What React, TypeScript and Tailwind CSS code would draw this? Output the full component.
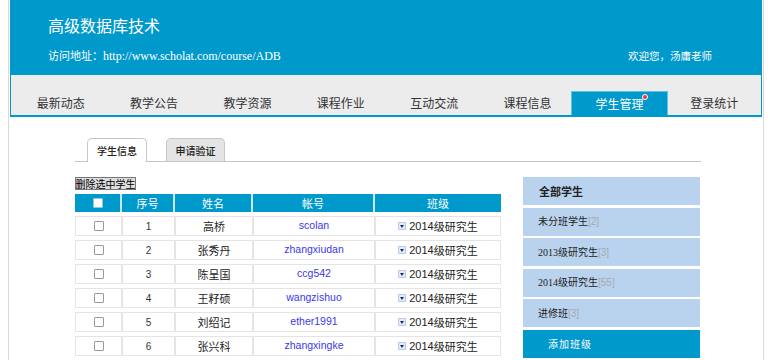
import React from 'react';

const navItems = ['最新动态', '教学公告', '教学资源', '课程作业', '互动交流', '课程信息', '学生管理', '登录统计'];

const students = [
    { no: 1, name: '高桥', account: 'scolan' },
    { no: 2, name: '张秀丹', account: 'zhangxiudan' },
    { no: 3, name: '陈呈国', account: 'ccg542' },
    { no: 4, name: '王籽硕', account: 'wangzishuo' },
    { no: 5, name: '刘绍记', account: 'ether1991' },
    { no: 6, name: '张兴科', account: 'zhangxingke' },
];

const groups = [
    { label: '未分班学生', count: 2 },
    { label: '2013级研究生', count: 3 },
    { label: '2014级研究生', count: 55 },
    { label: '进修班', count: 3 },
];

const cjk = "font-['Noto_Sans_CJK_SC','Noto_Sans',sans-serif]";
const widths = ['w-[47px]', 'w-[53px]', 'w-[78px]', 'w-[122px]', 'w-[126px]'];

function Checkbox({ light }: { light?: boolean }) {
    return (
        <span
            className={
                'inline-block w-[10px] h-[10px] rounded-[1px] border ' +
                (light ? 'bg-white border-[#8fc9e0]' : 'bg-white border-[#9a9a9a]')
            }
        />
    );
}

function DropIcon() {
    return (
        <span className="inline-flex items-center justify-center w-[8px] h-[8px] bg-[#e3ecf9] border border-[#b9cdea] mr-[3px]">
            <span className="w-0 h-0 border-l-[2.5px] border-r-[2.5px] border-t-[3px] border-l-transparent border-r-transparent border-t-[#1c2f6e]" />
        </span>
    );
}

export default function App() {
    return (
        <div className={'w-[770px] h-[360px] overflow-hidden bg-white ' + cjk}>
            <div className="ml-[8px] w-[756px] h-[360px] border-x border-[#dadada] px-px">
                {/* Header */}
                <header className="h-[75px] bg-[#0099cc] text-white pl-[38px] pr-[50px] pt-[15px]">
                    <div className="text-[16px] leading-[20px]">高级数据库技术</div>
                    <div className="flex items-center justify-between mt-[11px] h-[20px]">
                        <div className="text-[11px]">
                            访问地址：
                            <span className="font-['Liberation_Serif',serif] text-[12px]">http://www.scholat.com/course/ADB</span>
                        </div>
                        <div className="text-[10.5px]">欢迎您，汤庸老师</div>
                    </div>
                </header>

                {/* Nav */}
                <nav className="h-[42px] bg-[#ececec] border-x border-b-2 border-[#0099cc] pl-[3px] grid grid-cols-8 items-end">
                    {navItems.map((item) => {
                        const active = item === '学生管理';
                        return (
                            <div
                                key={item}
                                className={
                                    'relative h-[24px] flex items-center justify-center text-[12px] whitespace-nowrap ' +
                                    (active
                                        ? 'bg-[#0099cc] text-white border border-b-0 border-[#5cc3e6] -ml-[3px]'
                                        : 'text-[#333]')
                                }
                            >
                                {item}
                                {active && (
                                    <span className="absolute right-[19px] top-[2px] w-[6px] h-[6px] rounded-full bg-[#e8383d] border border-white" />
                                )}
                            </div>
                        );
                    })}
                </nav>

                {/* Body */}
                <div className="pl-[65px] pr-[61px]">
                    <div className="mt-[21px] h-[24px] flex items-end border-b border-[#c6c6c6]">
                        <div className="ml-[12px] w-[60px] h-[24px] -mb-px bg-white border border-b-0 border-[#c6c6c6] rounded-t-[5px] flex items-center justify-center text-[10px] font-medium text-[#222]">
                            学生信息
                        </div>
                        <div className="ml-[19px] w-[59px] h-[23px] bg-[#e4e4e4] border border-b-0 border-[#c6c6c6] rounded-t-[5px] flex items-center justify-center text-[10px] font-medium text-[#222]">
                            申请验证
                        </div>
                    </div>

                    <div className="flex mt-[15px]">
                        {/* Table */}
                        <div className="w-[426px]">
                            <button className="h-[13px] w-[61px] p-0 bg-[#dedede] border border-[#777] text-[10px] leading-[11px] text-black flex items-center justify-center whitespace-nowrap overflow-hidden">
                                删除选中学生
                            </button>
                            <div className="mt-[4px] flex h-[18px] bg-[#0099cc] text-white text-[11px]">
                                {['', '序号', '姓名', '帐号', '班级'].map((h, i) => (
                                    <div
                                        key={i}
                                        className={
                                            widths[i] +
                                            ' flex items-center justify-center ' +
                                            (i < 4 ? 'border-r-2 border-[#cfe6f0]' : '')
                                        }
                                    >
                                        {i === 0 ? <Checkbox light /> : h}
                                    </div>
                                ))}
                            </div>
                            {students.map((s) => (
                                <div key={s.no} className="mt-[4px] flex h-[20px] text-[11px] text-[#222]">
                                    <div className={widths[0] + ' border border-[#e4e4e4] flex items-center justify-center'}>
                                        <Checkbox />
                                    </div>
                                    <div className={widths[1] + " border border-[#e4e4e4] flex items-center justify-center font-['Liberation_Sans',sans-serif] text-[10px] text-[#333]"}>
                                        {s.no}
                                    </div>
                                    <div className={widths[2] + ' border border-[#e4e4e4] flex items-center justify-center'}>
                                        {s.name}
                                    </div>
                                    <div className={widths[3] + " border border-[#e4e4e4] flex items-center justify-center font-['Liberation_Sans',sans-serif] text-[10.5px] text-[#3a37f0]"}>
                                        {s.account}
                                    </div>
                                    <div className={widths[4] + ' border border-[#e4e4e4] flex items-center justify-center'}>
                                        <DropIcon />
                                        <span className="font-['Liberation_Sans',sans-serif] text-[11px]">2014</span>级研究生
                                    </div>
                                </div>
                            ))}
                        </div>

                        {/* Sidebar */}
                        <aside className="ml-[22px] w-[177px] flex flex-col gap-[2.5px]">
                            <div className="h-[28px] bg-[#b9d3ee] pl-[16px] flex items-center text-[11px] font-bold text-[#222]">
                                全部学生
                            </div>
                            {groups.map((g) => (
                                <div key={g.label} className="h-[28px] bg-[#b9d3ee] pl-[15px] flex items-center text-[10px] text-[#222]">
                                    <span className="font-['Liberation_Serif','Noto_Sans_CJK_SC',serif]">{g.label}</span>
                                    <span className="text-[#a3a9b3] font-['Liberation_Sans',sans-serif]">[{g.count}]</span>
                                </div>
                            ))}
                            <div className="h-[28px] bg-[#0099cc] pl-[25px] flex items-center text-[10px] tracking-[1px] text-white">
                                添加班级
                            </div>
                        </aside>
                    </div>
                </div>
            </div>
        </div>
    );
}
